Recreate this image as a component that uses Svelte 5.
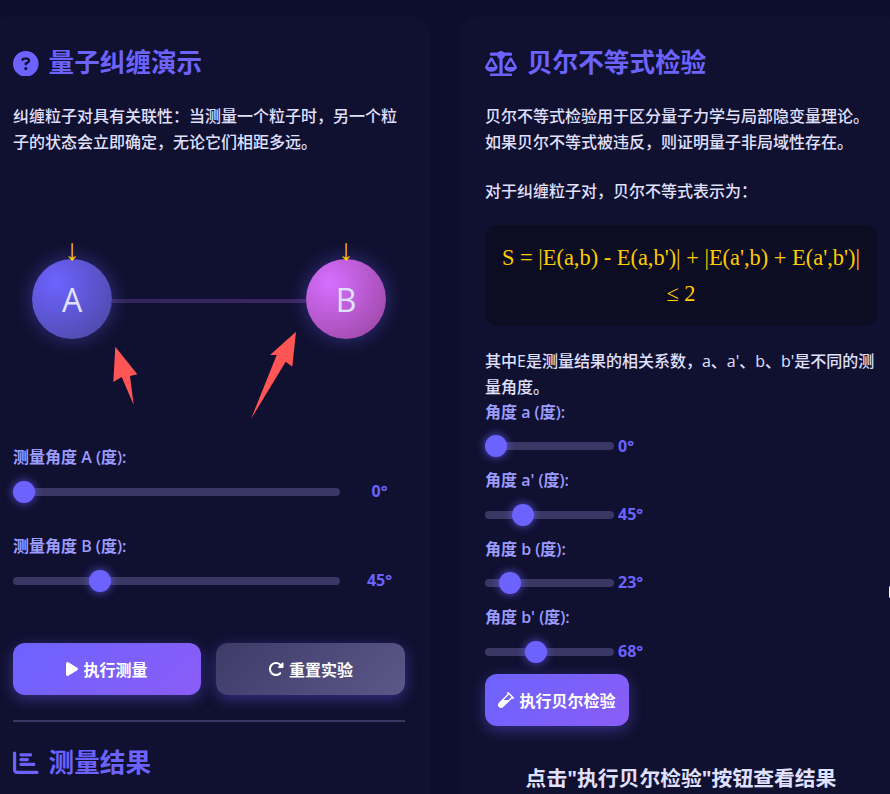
<script lang="ts">
	const AngleMax = 180;
	let angleA = $state(0);
	let angleB = $state(45);
	let bell = $state([
		{ name: 'a', value: 0 },
		{ name: "a'", value: 45 },
		{ name: 'b', value: 23 },
		{ name: "b'", value: 68 }
	]);

	function reset() {
		angleA = 0;
		angleB = 45;
	}
</script>

<div class="lab">
	<section class="panel">
		<h2>
			<svg class="icon" viewBox="0 0 512 512" width="25.6" height="25.6" aria-hidden="true">
				<path d="M256 512A256 256 0 1 0 256 0a256 256 0 1 0 0 512zM169.8 165.3c7.9-22.3 29.1-37.3 52.8-37.3h58.3c34.9 0 63.1 28.3 63.1 63.1c0 22.6-12.1 43.5-31.7 54.8L280 264.4c-.2 13-10.9 23.6-24 23.6c-13.3 0-24-10.7-24-24V250.5c0-8.6 4.6-16.5 12.1-20.8l44.3-25.4c4.7-2.7 7.6-7.7 7.6-13.1c0-8.4-6.8-15.1-15.1-15.1H222.6c-3.4 0-6.4 2.1-7.5 5.3l-.4 1.2c-4.4 12.5-18.2 19-30.6 14.6s-19-18.2-14.6-30.6l.4-1.2zM224 352a32 32 0 1 1 64 0 32 32 0 1 1 -64 0z" />
			</svg>
			量子纠缠演示
		</h2>
		<p class="intro">纠缠粒子对具有关联性：当测量一个粒子时，另一个粒子的状态会立即确定，无论它们相距多远。</p>

		<div class="stage">
			<div class="particle a"><span class="spin">↓</span>A</div>
			<div class="link"></div>
			<div class="particle b"><span class="spin">↓</span>B</div>
			<svg class="pointers" viewBox="0 0 392 260" aria-hidden="true">
				<polygon points="102.3,177.7 124.3,205.3 117,207 120.7,236 108.7,208 100.3,213" />
				<polygon points="283,162.7 279.3,197.7 272.7,192.7 238,250 263.7,186 257,186" />
			</svg>
		</div>

		<div class="control">
			<label for="angle-a">测量角度 A (度):</label>
			<div class="row wide">
				<input id="angle-a" type="range" min="0" max={AngleMax} bind:value={angleA} />
				<span class="value">{angleA}°</span>
			</div>
		</div>
		<div class="control">
			<label for="angle-b">测量角度 B (度):</label>
			<div class="row wide">
				<input id="angle-b" type="range" min="0" max={AngleMax} bind:value={angleB} />
				<span class="value">{angleB}°</span>
			</div>
		</div>

		<div class="actions">
			<button class="btn">
				<svg viewBox="0 0 384 512" width="12" height="16" aria-hidden="true">
					<path d="M73 39c-14.8-9.1-33.4-9.4-48.5-.9S0 62.6 0 80V432c0 17.4 9.4 33.4 24.5 41.9s33.7 8.1 48.5-.9L361 297c14.3-8.7 23-24.2 23-41s-8.7-32.2-23-41L73 39z" />
				</svg>
				执行测量
			</button>
			<button class="btn ghost" onclick={reset}>
				<svg viewBox="0 0 512 512" width="16" height="16" aria-hidden="true">
					<path d="M463.5 224H472c13.3 0 24-10.7 24-24V72c0-9.7-5.8-18.5-14.8-22.2s-19.3-1.7-26.2 5.2L413.4 96.6c-87.6-86.5-228.7-86.2-315.8 1c-87.5 87.5-87.5 229.3 0 316.8s229.3 87.5 316.8 0c12.5-12.5 12.5-32.8 0-45.3s-32.8-12.5-45.3 0c-62.5 62.5-163.8 62.5-226.3 0s-62.5-163.8 0-226.3c62.2-62.2 162.7-62.5 225.3-1L327 183c-6.9 6.9-8.9 17.2-5.2 26.2s12.5 14.8 22.2 14.8H463.5z" />
				</svg>
				重置实验
			</button>
		</div>

		<hr />

		<h2>
			<svg class="icon" viewBox="0 0 512 512" width="25.6" height="25.6" aria-hidden="true">
				<path d="M32 32c17.7 0 32 14.3 32 32V400c0 8.8 7.2 16 16 16H480c17.7 0 32 14.3 32 32s-14.3 32-32 32H80c-44.2 0-80-35.8-80-80V64C0 46.3 14.3 32 32 32zm96 64c0-17.7 14.3-32 32-32l192 0c17.7 0 32 14.3 32 32s-14.3 32-32 32l-192 0c-17.7 0-32-14.3-32-32zm32 64l128 0c17.7 0 32 14.3 32 32s-14.3 32-32 32l-128 0c-17.7 0-32-14.3-32-32s14.3-32 32-32zm0 96H416c17.7 0 32 14.3 32 32s-14.3 32-32 32H160c-17.7 0-32-14.3-32-32s14.3-32 32-32z" />
			</svg>
			测量结果
		</h2>
	</section>

	<section class="panel">
		<h2>
			<svg class="icon" viewBox="0 0 640 512" width="32" height="25.6" aria-hidden="true">
				<path d="M384 32H512c17.7 0 32 14.3 32 32s-14.3 32-32 32H398.4c-5.2 25.8-22.9 47.1-46.4 57.3V448H512c17.7 0 32 14.3 32 32s-14.3 32-32 32H320 128c-17.7 0-32-14.3-32-32s14.3-32 32-32H288V153.3c-23.5-10.3-41.2-31.6-46.4-57.3H128c-17.7 0-32-14.3-32-32s14.3-32 32-32H256c14.6-19.4 37.8-32 64-32s49.4 12.6 64 32zm55.6 288H584.4L512 195.8 439.6 320zM512 416c-62.9 0-115.2-34-126-78.9c-2.6-11 1-22.3 6.7-32.1l95.2-163.2c5-8.6 14.2-13.8 24.1-13.8s19.1 5.3 24.1 13.8l95.2 163.2c5.7 9.8 9.3 21.1 6.7 32.1C627.2 382 574.9 416 512 416zM126.8 195.8L54.4 320H199.3L126.8 195.8zM.9 337.1c-2.6-11 1-22.3 6.7-32.1l95.2-163.2c5-8.6 14.2-13.8 24.1-13.8s19.1 5.3 24.1 13.8l95.2 163.2c5.7 9.8 9.3 21.1 6.7 32.1C242 382 189.7 416 126.8 416S11.7 382 .9 337.1z" />
			</svg>
			贝尔不等式检验
		</h2>
		<p class="lead">贝尔不等式检验用于区分量子力学与局部隐变量理论。如果贝尔不等式被违反，则证明量子非局域性存在。</p>
		<p class="lead-in">对于纠缠粒子对，贝尔不等式表示为：</p>
		<div class="formula">S = |E(a,b) - E(a,b')| + |E(a',b) + E(a',b')| ≤ 2</div>
		<p class="note">其中E是测量结果的相关系数，a、a'、b、b'是不同的测量角度。</p>

		{#each bell as angle (angle.name)}
			<div class="control tight">
				<label for={`bell-${angle.name}`}>角度 {angle.name} (度):</label>
				<div class="row">
					<input id={`bell-${angle.name}`} type="range" min="0" max={AngleMax} bind:value={angle.value} />
					<span class="value">{angle.value}°</span>
				</div>
			</div>
		{/each}

		<button class="btn solo">
			<svg viewBox="0 0 512 512" width="16" height="16" aria-hidden="true">
				<path d="M342.6 9.4c-12.5-12.5-32.8-12.5-45.3 0s-12.5 32.8 0 45.3l9.4 9.4L28.1 342.6C10.1 360.6 0 385 0 410.5V416c0 53 43 96 96 96h5.5c25.5 0 49.9-10.1 67.9-28.1L448 205.3l9.4 9.4c12.5 12.5 32.8 12.5 45.3 0s12.5-32.8 0-45.3l-16-16L358.6 25.4l-16-16zM178.7 256L352 82.7 429.3 160l-96 96H178.7z" />
			</svg>
			执行贝尔检验
		</button>

		<div class="result">点击"执行贝尔检验"按钮查看结果</div>
	</section>

	<span class="blip"></span>
</div>

<style>
	:global(body) {
		background: #0d0d2e;
		color: #e0e0ff;
		font-family: 'Open Sans', 'Noto Sans CJK SC', sans-serif;
		font-size: 16px;
		line-height: 1.6;
		overflow: hidden;
	}

	.lab {
		position: relative;
		display: grid;
		grid-template-columns: 442px 442px;
		gap: 30px;
		width: 914px;
		height: 777px;
		margin-left: -12px;
		padding-top: 17px;
		overflow: hidden;
	}

	.panel {
		box-sizing: border-box;
		height: 860px;
		padding: 26px 25px 25px;
		background: #101030;
		border-radius: 15px;
	}

	h2 {
		display: flex;
		align-items: center;
		gap: 10px;
		margin: 0 0 20px;
		color: #6c63ff;
		font-size: 25.6px;
		font-weight: 700;
	}

	.icon {
		flex-shrink: 0;
		fill: #6c63ff;
	}

	p {
		margin: 0;
		font-weight: 500;
	}

	.intro {
		margin-bottom: 14px;
	}

	.lead {
		margin-bottom: 24px;
	}

	.lead-in {
		margin-bottom: 20px;
	}

	.stage {
		position: relative;
		display: flex;
		align-items: center;
		box-sizing: border-box;
		height: 260px;
		margin-bottom: 16px;
		padding: 0 19px;
	}

	.particle {
		position: relative;
		display: flex;
		align-items: center;
		justify-content: center;
		flex-shrink: 0;
		width: 80px;
		height: 80px;
		border-radius: 50%;
		font-size: 32px;
		box-shadow: 0 0 20px rgba(108, 99, 255, 0.4);
	}

	.particle.a {
		background: radial-gradient(circle at 30% 30%, #6c63ff, #4a459c);
	}

	.particle.b {
		background: radial-gradient(circle at 30% 30%, #d66fff, #96429b);
	}

	.spin {
		position: absolute;
		top: -24px;
		left: 0;
		right: 0;
		color: #ffcc00;
		font-family: 'Liberation Sans', sans-serif;
		font-size: 30px;
		line-height: 1;
		text-align: center;
	}

	.link {
		flex: 1;
		height: 4px;
		margin-top: 4px;
		background: linear-gradient(90deg, #32265c, #3c2560);
	}

	.pointers {
		position: absolute;
		inset: 0;
		width: 100%;
		height: 100%;
		fill: #ff5555;
		pointer-events: none;
	}

	.control {
		margin-bottom: 30px;
	}

	.control.tight {
		margin-bottom: 9.2px;
	}

	label {
		display: block;
		margin-bottom: 8px;
		color: #9c9cff;
		font-weight: 600;
	}

	.row {
		display: flex;
		align-items: center;
		gap: 4px;
	}

	.row.wide {
		gap: 14px;
	}

	.row.wide .value {
		width: 51px;
		text-align: center;
	}

	.value {
		color: #6c63ff;
		font-weight: 700;
	}

	input[type='range'] {
		-webkit-appearance: none;
		appearance: none;
		width: 129px;
		height: 8px;
		margin: 0;
		border-radius: 5px;
		background: #3a3765;
		outline: none;
	}

	.row.wide input[type='range'] {
		flex: 1;
		width: auto;
		min-width: 0;
	}

	input[type='range']::-webkit-slider-thumb {
		-webkit-appearance: none;
		width: 22px;
		height: 22px;
		border-radius: 50%;
		background: #6c63ff;
		box-shadow: 0 0 10px rgba(108, 99, 255, 0.8);
		cursor: pointer;
	}

	.actions {
		display: grid;
		grid-template-columns: 188fr 189fr;
		gap: 15px;
		margin-top: 49px;
	}

	.btn {
		display: flex;
		align-items: center;
		justify-content: center;
		gap: 5px;
		box-sizing: border-box;
		height: 52px;
		padding: 0 13px;
		border: none;
		border-radius: 12px;
		background: linear-gradient(135deg, #6c63ff, #8b5cf6);
		box-shadow: 0 4px 15px rgba(108, 99, 255, 0.4);
		color: #fff;
		font-family: inherit;
		font-size: 16px;
		font-weight: 700;
		cursor: pointer;
	}

	.btn svg {
		fill: #fff;
	}

	.btn.ghost {
		background: linear-gradient(135deg, #3f3b69, #5b5787);
	}

	.btn.solo {
		width: 144px;
	}

	hr {
		height: 2px;
		margin: 25px 0 21px;
		border: none;
		background: #3a3765;
	}

	.formula {
		box-sizing: border-box;
		margin-bottom: 22.5px;
		padding: 15px;
		border-radius: 12px;
		background: #0c0c22;
		color: #ffcc00;
		font-family: 'Liberation Serif', serif;
		font-size: 22.4px;
		text-align: center;
	}

	.result {
		margin-top: 36px;
		color: #e0e0ff;
		font-size: 20.8px;
		font-weight: 700;
		text-align: center;
	}

	.blip {
		position: absolute;
		top: 586px;
		left: 901px;
		width: 3px;
		height: 12px;
		border-radius: 2px;
		background: #f0f0f8;
	}
</style>
